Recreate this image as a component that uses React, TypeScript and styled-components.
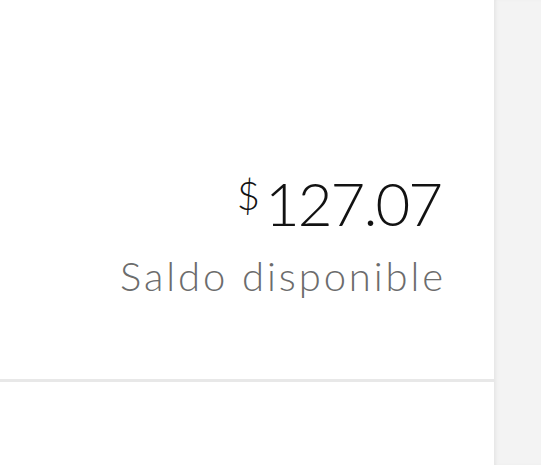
import React from "react";
import styled, { createGlobalStyle } from "styled-components";

const GlobalStyle = createGlobalStyle`
  html, body {
    margin: 0;
    padding: 0;
    background: #fff;
  }
  * {
    box-sizing: border-box;
  }
`;

const App: React.FC = () => {
  return (
    <>
      <GlobalStyle />
      <Page>
        <Main>
          <BalanceSection>
            <Amount>
              <Currency>$</Currency>
              <Value>127.07</Value>
            </Amount>
            <Label>Saldo disponible</Label>
          </BalanceSection>
        </Main>
        <SidePanel />
      </Page>
    </>
  );
};

export default App;

const Page = styled.div`
  display: flex;
  width: 541px;
  height: 465px;
  font-family: Lato, "Liberation Sans", sans-serif;
`;

const Main = styled.div`
  width: 494px;
  display: flex;
  flex-direction: column;
  background: #fff;
`;

const BalanceSection = styled.div`
  height: 382px;
  display: flex;
  flex-direction: column;
  align-items: flex-end;
  padding: 173px 51px 0 0;
  border-bottom: 3px solid #e8e8e8;
`;

const Amount = styled.div`
  display: flex;
  align-items: flex-start;
  color: #121212;
`;

const Currency = styled.span`
  font-size: 40px;
  font-weight: 300;
  line-height: 1;
  margin-top: 2px;
  margin-right: 5px;
`;

const Value = styled.span`
  font-size: 60px;
  font-weight: 300;
  line-height: 1;
  letter-spacing: -2px;
  margin-right: 2px;
`;

const Label = styled.div`
  margin-top: 23px;
  margin-right: -3px;
  font-size: 40px;
  font-weight: 300;
  line-height: 1;
  letter-spacing: 2.9px;
  color: #6c6c6c;
`;

const SidePanel = styled.div`
  flex: 1;
  background: #f3f3f3;
  box-shadow: inset 3px 0 3px -1px #e6e6e6;
`;
